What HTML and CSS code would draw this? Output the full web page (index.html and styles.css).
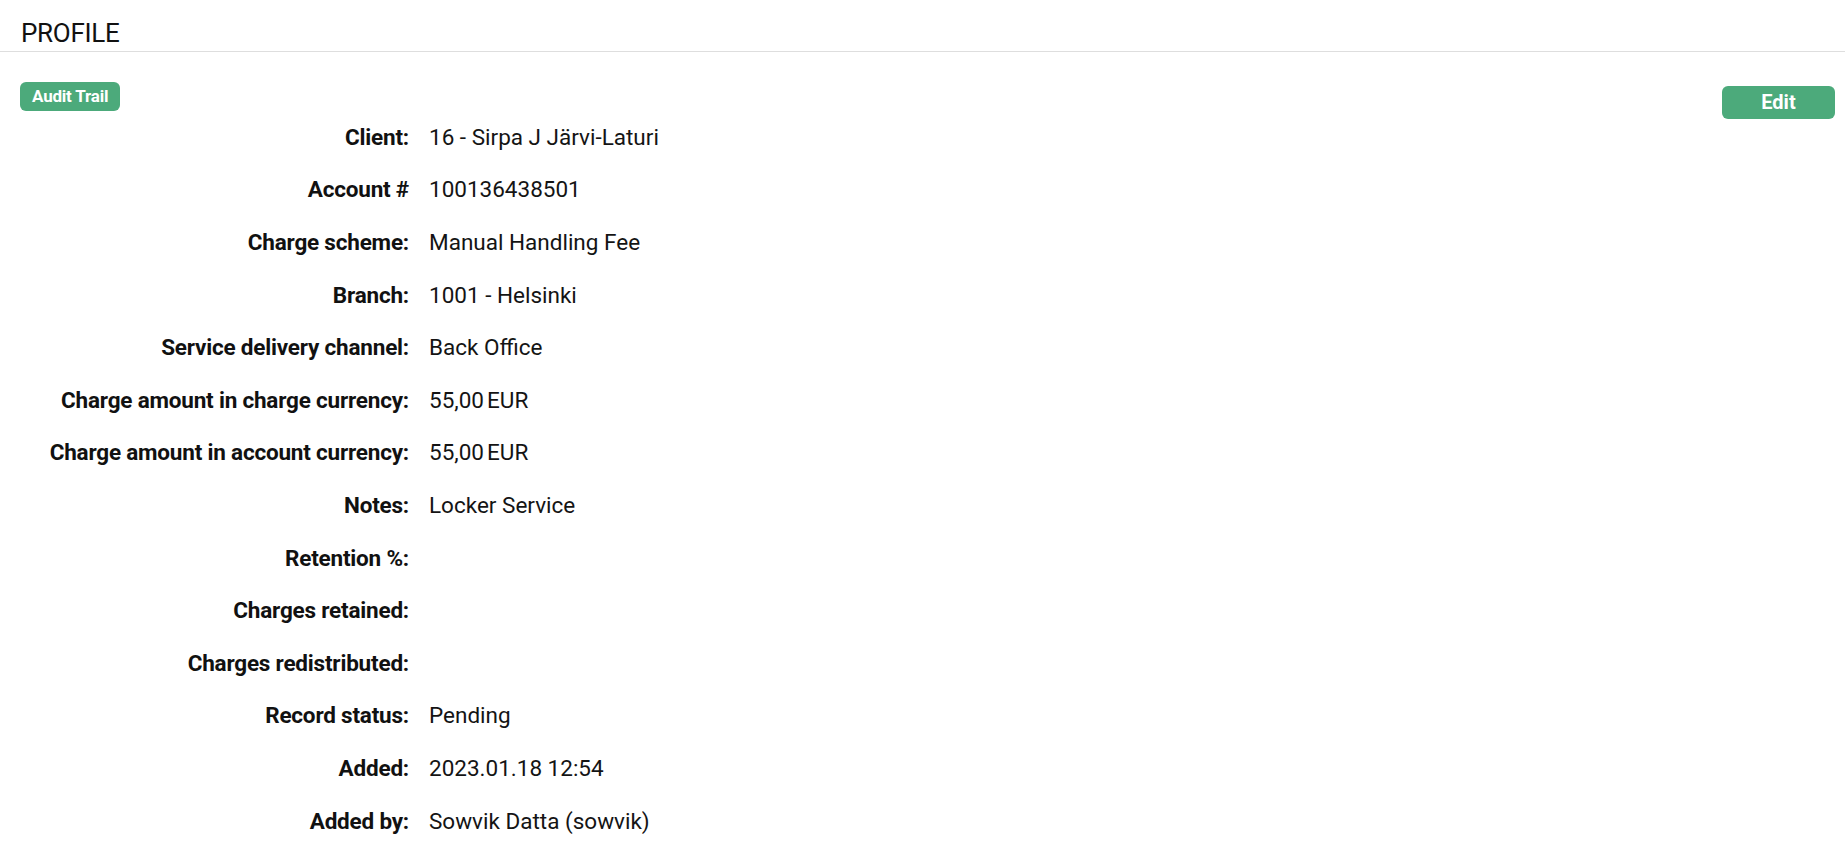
FILE: index.html
```html
<!DOCTYPE html>
<html lang="en">
<head>
<meta charset="utf-8">
<title>Profile</title>
<link rel="stylesheet" href="styles.css">
</head>
<body>
<header class="page-header">
  <h1 class="page-title">PROFILE</h1>
</header>
<main class="content">
  <div class="toolbar">
    <a class="badge" href="#">Audit Trail</a>
    <a class="btn-edit" href="#">Edit</a>
  </div>
  <dl class="details">
    <div class="row"><dt class="label">Client:</dt><dd class="value">16 - Sirpa J Järvi-Laturi</dd></div>
    <div class="row"><dt class="label">Account #</dt><dd class="value">100136438501</dd></div>
    <div class="row"><dt class="label">Charge scheme:</dt><dd class="value">Manual Handling Fee</dd></div>
    <div class="row"><dt class="label">Branch:</dt><dd class="value">1001 - Helsinki</dd></div>
    <div class="row"><dt class="label">Service delivery channel:</dt><dd class="value">Back Office</dd></div>
    <div class="row"><dt class="label">Charge amount in charge currency:</dt><dd class="value">55,00<span class="cur">EUR</span></dd></div>
    <div class="row"><dt class="label">Charge amount in account currency:</dt><dd class="value">55,00<span class="cur">EUR</span></dd></div>
    <div class="row"><dt class="label">Notes:</dt><dd class="value">Locker Service</dd></div>
    <div class="row"><dt class="label">Retention %:</dt><dd class="value"></dd></div>
    <div class="row"><dt class="label">Charges retained:</dt><dd class="value"></dd></div>
    <div class="row"><dt class="label">Charges redistributed:</dt><dd class="value"></dd></div>
    <div class="row"><dt class="label">Record status:</dt><dd class="value">Pending</dd></div>
    <div class="row"><dt class="label">Added:</dt><dd class="value">2023.01.18 12:54</dd></div>
    <div class="row"><dt class="label">Added by:</dt><dd class="value">Sowvik Datta (sowvik)</dd></div>
  </dl>
</main>
</body>
</html>
```

FILE: styles.css
```css
html, body {
  margin: 0;
  padding: 0;
  background: #ffffff;
  color: #141414;
  font-family: Roboto, "Liberation Sans", Arial, sans-serif;
}

.page-header {
  height: 52px;
  box-sizing: border-box;
  padding: 18px 21px 4px;
  border-bottom: 1px solid #dedede;
}

.page-title {
  margin: 0;
  font-size: 26px;
  line-height: 30px;
  font-weight: 400;
  letter-spacing: -0.3px;
  color: #111;
}

.content {
  padding: 30px 10px 0 20px;
}

.toolbar {
  display: flex;
  justify-content: space-between;
  align-items: flex-start;
  height: 29px;
}

.badge {
  display: inline-block;
  height: 29px;
  line-height: 29px;
  padding: 0 12px;
  background: #4caa7b;
  color: #fff;
  font-size: 17px;
  font-weight: 700;
  letter-spacing: -0.2px;
  border-radius: 6px;
  text-decoration: none;
}

.btn-edit {
  display: inline-block;
  width: 113px;
  height: 33px;
  line-height: 33px;
  margin-top: 4px;
  text-align: center;
  background: #4caa7b;
  color: #fff;
  font-size: 20px;
  font-weight: 700;
  border-radius: 6px;
  text-decoration: none;
}

.details {
  margin: 0;
  padding: 0;
}

.row {
  display: flex;
  padding: 9.8px 0;
  line-height: 33px;
  font-size: 22.5px;
}

.label {
  width: 389px;
  flex: none;
  text-align: right;
  font-weight: 700;
  letter-spacing: -0.2px;
  color: #111;
}

.value {
  margin: 0;
  padding-left: 20px;
  font-weight: 400;
  color: #141414;
}

.cur {
  margin-left: 3px;
}
```
